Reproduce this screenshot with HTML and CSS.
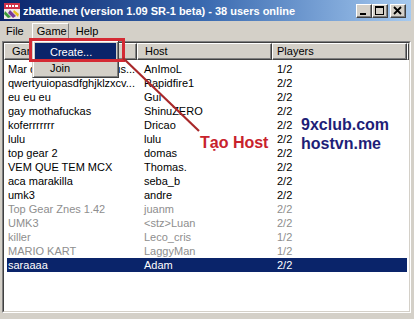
FILE: index.html
```html
<!DOCTYPE html>
<html>
<head>
<meta charset="utf-8">
<link rel="stylesheet" href="styles.css">
</head>
<body>
<div class="win">
  <div class="titlebar">
    <svg class="icon" width="16" height="16" viewBox="0 0 16 16">
      <rect x="0" y="0" width="16" height="16" fill="#f0e8ea"/>
      <rect x="0" y="0" width="16" height="6" fill="#d0304a"/>
      <rect x="2" y="2" width="2" height="2" fill="#fff"/>
      <rect x="5" y="2" width="2" height="2" fill="#fff"/>
      <rect x="8" y="2" width="2" height="2" fill="#fff"/>
      <rect x="11" y="2" width="3" height="2" fill="#fff"/>
      <polygon points="1,8 7,14 4,15 0,11" fill="#3a9a3a"/>
      <polygon points="6,7 12,13 9,15 4,10" fill="#7a3a9a"/>
      <polygon points="10,7 15,11 14,14 9,9" fill="#e8c020"/>
    </svg>
    <span class="title">zbattle.net (version 1.09 SR-1 beta) - 38 users online</span>
    <div class="btns">
      <span class="wbtn"><svg width="14" height="12" viewBox="0 0 14 12"><rect x="3" y="8" width="6" height="2" fill="#000"/></svg></span>
      <span class="wbtn"><svg width="14" height="12" viewBox="0 0 14 12"><rect x="2.5" y="1.5" width="8" height="8" fill="none" stroke="#000"/><rect x="2" y="1" width="9" height="2" fill="#000"/></svg></span>
      <span class="wbtn close"><svg width="14" height="12" viewBox="0 0 14 12"><path d="M3 2 L10 9 M10 2 L3 9" stroke="#000" stroke-width="1.8"/></svg></span>
    </div>
  </div>
  <div class="menubar">
    <span class="mi mi-file">File</span>
    <span class="mi mi-game">Game</span>
    <span class="mi mi-help">Help</span>
  </div>
  <div class="list">
    <div class="list-inner">
      <div class="hdr">
        <div class="hc hc1">Game</div>
        <div class="hc hc2">Host</div>
        <div class="hc hc3">Players</div>
        <div class="hc hc4"></div>
      </div>
      <div class="rows">
        <div class="row"><span>Mar del Plata Big Circus...</span><span>AnImoL</span><span>1/2</span></div>
        <div class="row"><span>qwertyuiopasdfghjklzxcv...</span><span>Rapidfire1</span><span>2/2</span></div>
        <div class="row"><span>eu eu eu</span><span>Gui</span><span>2/2</span></div>
        <div class="row"><span>gay mothafuckas</span><span>ShinuZERO</span><span>2/2</span></div>
        <div class="row"><span>koferrrrrrr</span><span>Dricao</span><span>2/2</span></div>
        <div class="row"><span>lulu</span><span>lulu</span><span>2/2</span></div>
        <div class="row"><span>top gear 2</span><span>domas</span><span>2/2</span></div>
        <div class="row"><span>VEM QUE TEM MCX</span><span>Thomas.</span><span>2/2</span></div>
        <div class="row"><span>aca marakilla</span><span>seba_b</span><span>2/2</span></div>
        <div class="row"><span>umk3</span><span>andre</span><span>2/2</span></div>
        <div class="row dim"><span>Top Gear Znes 1.42</span><span>juanm</span><span>2/2</span></div>
        <div class="row dim"><span>UMK3</span><span>&lt;stz&gt;Luan</span><span>2/2</span></div>
        <div class="row dim"><span>killer</span><span>Leco_cris</span><span>1/2</span></div>
        <div class="row dim"><span>MARIO KART</span><span>LaggyMan</span><span>1/2</span></div>
        <div class="row sel"><span>saraaaa</span><span>Adam</span><span>2/2</span></div>
      </div>
    </div>
  </div>

  <div class="popup">
    <div class="pi pi-sel">Create...</div>
    <div class="pi">Join</div>
  </div>
  <div class="redbox"></div>
  <svg class="arrow" width="414" height="319" viewBox="0 0 414 319">
    <line x1="123" y1="58" x2="199" y2="131" stroke="#a8282a" stroke-width="2.2"/>
  </svg>
  <div class="tag">Tạo Host</div>
  <div class="brand b1">9xclub.com</div>
  <div class="brand b2">hostvn.me</div>
</div>
</body>
</html>
```

FILE: styles.css
```css
* { box-sizing: border-box; }
html, body {
  margin: 0;
  padding: 0;
}
body {
  width: 414px;
  height: 319px;
  overflow: hidden;
  background: #d4d0c8;
  font-family: "Liberation Sans", Arial, sans-serif;
  font-size: 11px;
  color: #000;
}
.win {
  position: relative;
  width: 414px;
  height: 319px;
  display: flex;
  flex-direction: column;
}
.titlebar {
  height: 21px;
  margin-right: 3px;
  display: flex;
  align-items: center;
  padding-left: 4px;
  padding-right: 5px;
  background: linear-gradient(to right, #0a246a 0%, #3a6ab0 50%, #a6caf0 100%);
}
.icon { flex: none; margin-right: 3px; }
.title {
  flex: 1;
  color: #fff;
  font-weight: bold;
  font-size: 11px;
  white-space: nowrap;
}
.btns { display: flex; }
.wbtn {
  width: 16px;
  height: 14px;
  background: #d4d0c8;
  border: 1px solid;
  border-color: #fff #404040 #404040 #fff;
  box-shadow: inset -1px -1px #808080;
  display: flex;
  align-items: center;
  justify-content: center;
}
.wbtn svg { display: block; }
.close { margin-left: 2px; }

.menubar {
  height: 20px;
  display: flex;
  align-items: center;
}
.mi { line-height: 15px; }
.mi-file { padding: 0 8px 0 6px; }
.mi-game {
  padding: 0 1px 0 4px;
  height: 17px;
  border: 1px solid;
  border-color: #fff #808080 #808080 #fff;
  margin-left: 0;
}
.mi-help { padding-left: 7px; }

.list {
  margin: 0 3px 6px 2px;
  height: 272px;
  border: 1px solid;
  border-color: #808080 #fff #fff #808080;
}
.list-inner {
  height: 100%;
  border: 1px solid;
  border-color: #404040 #d4d0c8 #d4d0c8 #404040;
  background: #fff;
}
.hdr {
  display: flex;
  height: 17px;
}
.hc {
  height: 17px;
  line-height: 15px;
  background: #d4d0c8;
  border: 1px solid;
  border-color: #fff #404040 #404040 #fff;
  box-shadow: inset -1px -1px #808080;
  padding-left: 7px;
  white-space: nowrap;
  overflow: hidden;
}
.hc1 { width: 133px; }
.hc2 { width: 135px; }
.hc3 { width: 135px; padding-left: 4px; }
.hc4 { flex: 1; padding: 0; }

.rows {
  margin: 2px 0 0 3px;
  width: 400px;
}
.row {
  display: grid;
  grid-template-columns: 130px 135px 1fr;
  height: 14px;
  line-height: 14px;
  white-space: nowrap;
}
.row span { overflow: hidden; }
.row span:nth-child(1) { padding-left: 1px; }
.row span:nth-child(2) { padding-left: 7px; }
.row span:nth-child(3) { padding-left: 5px; }
.dim { color: #8e8e8e; }
.sel { background: #0a246a; color: #fff; }

.popup {
  position: absolute;
  left: 32px;
  top: 40px;
  width: 87px;
  height: 38px;
  background: #d4d0c8;
  border: 1px solid;
  border-color: #d4d0c8 #404040 #404040 #d4d0c8;
  box-shadow: inset 1px 1px #fff, inset -1px -1px #808080;
  padding: 2px 2px;
}
.pi {
  height: 17px;
  line-height: 17px;
  padding-left: 15px;
}
.pi-sel {
  background: #0a246a;
  color: #fff;
  padding-top: 1px;
}
.redbox {
  position: absolute;
  left: 29px;
  top: 38px;
  width: 96px;
  height: 24px;
  border: 3px solid #d42a34;
}
.arrow {
  position: absolute;
  left: 0;
  top: 0;
}
.tag {
  position: absolute;
  left: 200px;
  top: 134px;
  font-size: 16px;
  line-height: 18px;
  font-weight: bold;
  color: #c8222c;
  text-shadow: 0 0 2px #fff, 0 0 2px #fff;
  white-space: nowrap;
}
.brand {
  position: absolute;
  left: 301px;
  font-size: 16px;
  line-height: 18px;
  font-weight: bold;
  color: #1e1e78;
  white-space: nowrap;
}
.b1 { top: 116px; }
.b2 { top: 135px; }
```
